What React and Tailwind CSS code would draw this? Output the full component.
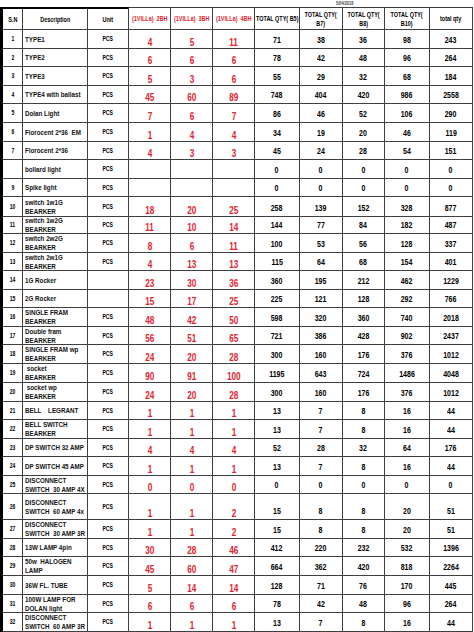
import React from 'react';

const cols = 'grid grid-cols-[20px_65px_41px_42px_42px_42px_45px_43px_42px_45px_43px]';

const rows = [
  ['1', ['TYPE1'], 'PCS', '4', '5', '11', '71', '38', '36', '98', '243', 'h-[19px]'],
  ['2', ['TYPE2'], 'PCS', '6', '6', '6', '78', '42', '48', '96', '264', 'h-[18px]'],
  ['3', ['TYPE3'], 'PCS', '5', '3', '6', '55', '29', '32', '68', '184', 'h-[19px]'],
  ['4', ['TYPE4 with ballast'], 'PCS', '45', '60', '89', '748', '404', '420', '986', '2558', 'h-[18px]'],
  ['5', ['Dolan Light'], 'PCS', '7', '6', '7', '86', '46', '52', '106', '290', 'h-[19px]'],
  ['6', ['Florocent 2*36  EM'], 'PCS', '1', '4', '4', '34', '19', '20', '46', '119', 'h-[19px]'],
  ['7', ['Florocent 2*36'], 'PCS', '4', '3', '3', '45', '24', '28', '54', '151', 'h-[18px]'],
  ['', ['bollard light'], 'PCS', '', '', '', '0', '0', '0', '0', '0', 'h-[19px]'],
  ['9', ['Spike light'], 'PCS', '', '', '', '0', '0', '0', '0', '0', 'h-[18px]'],
  ['10', ['switch 1w1G', 'BEARKER'], 'PCS', '18', '20', '25', '258', '139', '152', '328', '877', 'h-[20px]'],
  ['11', ['switch 1w2G', 'BEARKER'], 'PCS', '11', '10', '14', '144', '77', '84', '182', '487', 'h-[17px]'],
  ['12', ['switch 2w2G', 'BEARKER'], 'PCS', '8', '6', '11', '100', '53', '56', '128', '337', 'h-[19px]'],
  ['13', ['switch 2w1G', 'BEARKER'], 'PCS', '4', '13', '13', '115', '64', '68', '154', '401', 'h-[18px]'],
  ['14', ['1G Rocker'], '', '23', '30', '36', '360', '195', '212', '462', '1229', 'h-[19px]'],
  ['15', ['2G Rocker'], '', '15', '17', '25', '225', '121', '128', '292', '766', 'h-[18px]'],
  ['16', ['SINGLE FRAM', 'BEARKER'], 'PCS', '48', '42', '50', '598', '320', '360', '740', '2018', 'h-[19px]'],
  ['17', ['Double fram', 'BEARKER'], 'PCS', '56', '51', '65', '721', '386', '428', '902', '2437', 'h-[18px]'],
  ['18', ['SINGLE FRAM wp', 'BEARKER'], 'PCS', '24', '20', '28', '300', '160', '176', '376', '1012', 'h-[19px]'],
  ['19', [' socket', 'BEARKER'], 'PCS', '90', '91', '100', '1195', '643', '724', '1486', '4048', 'h-[19px]'],
  ['20', [' socket wp', 'BEARKER'], 'PCS', '24', '20', '28', '300', '160', '176', '376', '1012', 'h-[19px]'],
  ['21', ['BELL    LEGRANT'], 'PCS', '1', '1', '1', '13', '7', '8', '16', '44', 'h-[18px]'],
  ['22', ['BELL SWITCH', 'BEARKER'], 'PCS', '1', '1', '1', '13', '7', '8', '16', '44', 'h-[19px]'],
  ['23', ['DP SWITCH 32 AMP'], 'PCS', '4', '4', '4', '52', '28', '32', '64', '176', 'h-[18px]'],
  ['24', ['DP SWITCH 45 AMP'], 'PCS', '1', '1', '1', '13', '7', '8', '16', '44', 'h-[19px]'],
  ['25', ['DISCONNECT', 'SWITCH  30 AMP 4X'], 'PCS', '0', '0', '0', '0', '0', '0', '0', '0', 'h-[18px]'],
  ['26', ['DISCONNECT', 'SWITCH  60 AMP 4x'], 'PCS', '1', '1', '2', '15', '8', '8', '20', '51', 'h-[26px]'],
  ['27', ['DISCONNECT', 'SWITCH  30 AMP 3R'], 'PCS', '1', '1', '2', '15', '8', '8', '20', '51', 'h-[19px]'],
  ['28', ['13W LAMP 4pin'], 'PCS', '30', '28', '46', '412', '220', '232', '532', '1396', 'h-[18px]'],
  ['29', ['50w  HALOGEN', 'LAMP'], 'PCS', '45', '60', '47', '664', '362', '420', '818', '2264', 'h-[19px]'],
  ['30', ['36W FL. TUBE'], 'PCS', '5', '14', '14', '128', '71', '76', '170', '445', 'h-[19px]'],
  ['31', ['100W LAMP FOR', 'DOLAN light'], 'PCS', '6', '6', '6', '78', '42', '48', '96', '264', 'h-[18px]'],
  ['32', ['DISCONNECT', 'SWITCH  60 AMP 3R'], 'PCS', '1', '1', '1', '13', '7', '8', '16', '44', 'h-[19px]'],
];

const cell = 'border-r border-b border-[#3f3f3f] overflow-hidden';

// Calibri-ish narrow look: Liberation Sans squeezed horizontally
function Narrow({ children, left }) {
  return (
    <span className={`inline-block whitespace-pre scale-x-[0.78] ${left ? 'origin-left' : 'origin-center'}`}>
      {children}
    </span>
  );
}

function HeadCell({ children, red, strong }) {
  return (
    <div
      className={`${cell} ${strong ? 'border-t-2 border-t-black' : 'border-t border-t-[#3f3f3f]'} flex items-center justify-center text-center text-[7px] leading-[9px] font-bold ${red ? 'text-[#e3232c]' : 'text-black'}`}
    >
      {children}
    </div>
  );
}

function Row({ r }) {
  const [sn, desc, unit, a, b, c, t1, t2, t3, t4, t5, h] = r;
  return (
    <div className={`${cols} ${h}`}>
      <div className={`${cell} flex items-center justify-center text-[6.5px] font-bold`}>
        <Narrow>{sn}</Narrow>
      </div>
      <div className={`${cell} flex flex-col justify-center pl-[2px] text-[8px] leading-[9px] font-bold text-[#111]`}>
        {desc.map((d, i) => (
          <Narrow key={i} left>
            {d}
          </Narrow>
        ))}
      </div>
      <div className={`${cell} flex items-center justify-center text-[6.5px] font-bold`}>
        <Narrow>{unit}</Narrow>
      </div>
      {[a, b, c].map((v, i) => (
        <div key={i} className={`${cell} flex items-end justify-center pb-[1px] text-[10.5px] leading-[10px] font-bold text-[#e3232c]`}>
          <Narrow>{v}</Narrow>
        </div>
      ))}
      {[t1, t2, t3, t4, t5].map((v, i) => (
        <div key={i} className={`${cell} flex items-end justify-center pb-[3px] text-[9px] leading-[9px] font-bold text-black`}>
          <Narrow>{v}</Narrow>
        </div>
      ))}
    </div>
  );
}

export default function App() {
  return (
    <div className="w-[474px] h-[632px] overflow-hidden bg-white text-black [font-family:'Liberation_Sans',Arial,sans-serif]">
      <div className="h-[7px] pl-[336px] text-[5px] leading-[6px] font-bold text-[#444]">
        <Narrow left>5/04/2018</Narrow>
      </div>
      <div className="w-[473px] border-l-[3px] border-black">
        <div className={`${cols} h-[23px]`}>
          <HeadCell strong>
            <Narrow>S.N</Narrow>
          </HeadCell>
          <HeadCell strong>
            <Narrow>Description</Narrow>
          </HeadCell>
          <HeadCell strong>
            <Narrow>Unit</Narrow>
          </HeadCell>
          <HeadCell red>
            <Narrow>(1VILLa)  2BH</Narrow>
          </HeadCell>
          <HeadCell red>
            <Narrow>(1VILLa)  3BH</Narrow>
          </HeadCell>
          <HeadCell red>
            <Narrow>(1VILLa)  4BH</Narrow>
          </HeadCell>
          <HeadCell>
            <Narrow>TOTAL QTY( B5)</Narrow>
          </HeadCell>
          <HeadCell>
            <Narrow>{'TOTAL QTY(\nB7)'}</Narrow>
          </HeadCell>
          <HeadCell>
            <Narrow>{'TOTAL QTY(\nB8)'}</Narrow>
          </HeadCell>
          <HeadCell>
            <Narrow>{'TOTAL QTY(\nB10)'}</Narrow>
          </HeadCell>
          <HeadCell>
            <Narrow>total qty</Narrow>
          </HeadCell>
        </div>
        {rows.map((r, i) => (
          <Row key={i} r={r} />
        ))}
      </div>
    </div>
  );
}
